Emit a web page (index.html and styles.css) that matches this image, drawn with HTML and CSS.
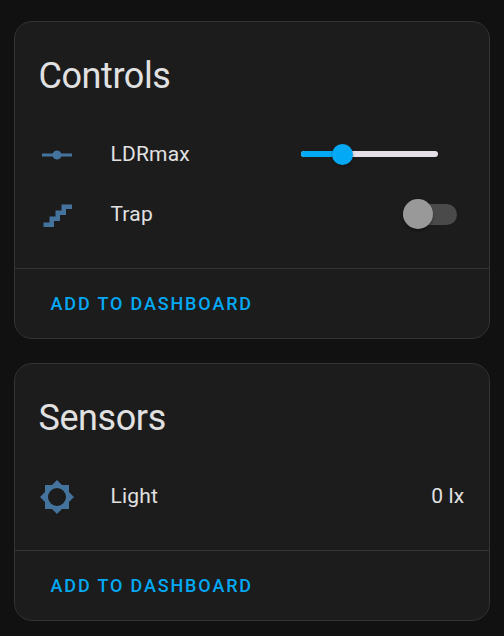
FILE: index.html
```html
<!DOCTYPE html>
<html lang="en">
<head>
<meta charset="utf-8">
<title>Device</title>
<link rel="stylesheet" href="styles.css">
</head>
<body>
<main class="page">
  <section class="card">
    <h1 class="title">Controls</h1>
    <div class="row">
      <svg class="icon" viewBox="0 0 24 24"><path d="M2,11H9.17C9.58,9.83 10.69,9 12,9C13.31,9 14.42,9.83 14.83,11H22V13H14.83C14.42,14.17 13.31,15 12,15C10.69,15 9.58,14.17 9.17,13H2V11Z"/></svg>
      <span class="name">LDRmax</span>
      <div class="slider"><div class="fill"></div><div class="knob"></div></div>
    </div>
    <div class="row">
      <svg class="icon" viewBox="0 0 24 24"><path d="M15,5V9H11V13H7V17H3V20H10V16H14V12H18V8H22V5H15Z"/></svg>
      <span class="name">Trap</span>
      <div class="switch"><div class="thumb"></div></div>
    </div>
    <footer class="actions"><span class="button">ADD TO DASHBOARD</span></footer>
  </section>
  <section class="card sensors">
    <h1 class="title">Sensors</h1>
    <div class="row">
      <svg class="icon" viewBox="0 0 24 24"><path d="M12,18A6,6 0 0,1 6,12A6,6 0 0,1 12,6A6,6 0 0,1 18,12A6,6 0 0,1 12,18M20,15.31L23.31,12L20,8.69V4H15.31L12,0.69L8.69,4H4V8.69L0.69,12L4,15.31V20H8.69L12,23.31L15.31,20H20V15.31Z"/></svg>
      <span class="name">Light</span>
      <span class="value">0 lx</span>
    </div>
    <footer class="actions"><span class="button">ADD TO DASHBOARD</span></footer>
  </section>
</main>
</body>
</html>
```
FILE: styles.css
```css
* { box-sizing: border-box; }
body { margin: 0; background: #111; font-family: Roboto, sans-serif; color: #e1e1e1; }
.page { height: 636px; padding: 21px 14px 0; display: flex; flex-direction: column; gap: 24px; }
.card { height: 318px; background: #1c1c1c; border: 1px solid #333; border-radius: 18px; display: flex; flex-direction: column; }
.sensors { height: 258px; }
.title { margin: 0; padding: 24px 23.5px 0; height: 102px; font-size: 36px; line-height: 60px; font-weight: 400; letter-spacing: -0.42px; }
.row { height: 60px; padding: 0 24px; display: flex; align-items: center; }
.icon { width: 36px; height: 36px; margin-top: 2px; fill: #44739e; flex: none; }
.name { margin-left: 35.4px; flex: 1; font-size: 21px; line-height: 30px; letter-spacing: 0.2px; }
.value { margin-right: 0.5px; font-size: 21px; line-height: 30px; letter-spacing: 0.2px; }
.slider { width: 137px; height: 6px; margin-right: 27px; border-radius: 3px; background: #e6e0e9; display: flex; align-items: center; }
.fill { width: 41px; height: 6px; border-radius: 3px; background: #03a9f4; }
.knob { width: 21px; height: 21px; margin-left: -10px; border-radius: 50%; background: #03a9f4; flex: none; box-shadow: 0 1px 3px rgba(0,0,0,.35); }
.switch { width: 54px; height: 21px; margin-right: 8px; border-radius: 11px; background: #4a4a4a; display: flex; align-items: center; }
.thumb { width: 30px; height: 30px; border-radius: 50%; background: #999; flex: none; box-shadow: 0 2px 3px rgba(0,0,0,.3); }
.actions { margin-top: auto; height: 70px; border-top: 1px solid #333; padding: 0 35.5px; display: flex; align-items: center; }
.button { font-size: 18px; line-height: 24px; font-weight: 500; letter-spacing: 1.85px; color: #03a9f4; }
```
